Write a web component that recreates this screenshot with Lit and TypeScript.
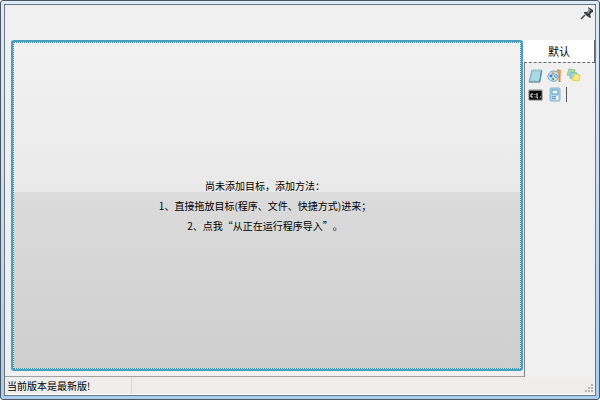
import { LitElement, html, css, svg } from "lit";
import { customElement } from "lit/decorators.js";

const pin = svg`
  <path d="M8 1l5 3v2l-2 1-1 2 1 2-1 1-3-2-3-3V6l3 0 2-2z" fill="#343a40"/>
  <path d="M9 3l2 1-3 4-1-1z" fill="#8b949c"/>
  <path d="M5 9L1 13" stroke="#444" stroke-width="1.500"/>`;

const notepad = svg`
  <path d="M4 2h10l-2 12H1z" fill="#9fcfdc" stroke="#83aab8"/>
  <path d="M5 4h7l-1 8H3z" fill="#a9dbe6"/>
  <path d="M4 2h10" stroke="#d8eaee" stroke-dasharray="1 1"/>
  <path d="M13.500 3l-2 11" stroke="#4b8797"/>
  <path d="M1 14h11" stroke="#71919c"/>`;

const paint = svg`
  <path d="M7 3C3 3 1 6 1 9s4 5 8 4c2-1 1-3 3-4s1-6-5-6z" fill="#c5dff0" stroke="#72a9cd"/>
  <circle cx="4" cy="8" r="1.400" fill="#3b87c8"/>
  <circle cx="6" cy="5.500" r="1.200" fill="#e5875c"/>
  <circle cx="6" cy="11" r="1.200" fill="#5cae78"/>
  <circle cx="9" cy="8" r="1.400" fill="#fff" stroke="#4b8fbd"/>
  <path d="M12.500 5v9" stroke="#dc8a34" stroke-width="2"/>
  <path d="M10 1l4 1v3h-4z" fill="#e3a052"/>`;

const notes = svg`
  <path d="M3 1l6 1-1 6-7-1z" fill="#b2dba0" stroke="#93c990"/>
  <path d="M5 4l6 1-1 6-6-1z" fill="#9fd2df" stroke="#7dbac9"/>
  <path d="M8 6l6 1-1 6-7-1z" fill="#f6ea86" stroke="#e0cf62"/>`;

const cmd = svg`
  <path d="M1 3h13v10H1z" fill="#050505" stroke="#777"/>
  <path d="M1 3h13" stroke="#b8bcc0"/>
  <path d="M5 7H3v3h2M7 7v1M7 9.500v1M9 6v5h1M12 10h1" stroke="#f2f2f2" fill="none"/>`;

const calc = svg`
  <rect x="3" y="1" width="10" height="13" rx="1" fill="#b5d7ec" stroke="#88b4d2"/>
  <rect x="5" y="3" width="6" height="4" fill="#eaf8fc" stroke="#5c9fc6"/>
  <path d="M5 9.500h5M5 11.500h5" stroke="#6c9fc2"/>
  <path d="M9 9h2v4H9z" fill="#f3f4ee"/>`;

const tools = [
  { name: "记事本", art: notepad },
  { name: "画图", art: paint },
  { name: "便笺", art: notes },
  { name: "命令提示符", art: cmd },
  { name: "计算器", art: calc },
];

@customElement("app-root")
export class AppRoot extends LitElement {
  static styles = css`
    :host {
      display: block;
      height: 100vh;
      font: 10px/20px "Noto Sans CJK SC", sans-serif;
      text-spacing-trim: space-all;
      color: #000;
    }
    * { box-sizing: border-box; }
    button {
      margin: 0;
      padding: 0;
      border: 0;
      background: none;
      font: inherit;
      color: inherit;
      text-spacing-trim: inherit;
    }
    svg { display: block; }
    .frame {
      height: 100%;
      padding: 3px;
      border: 1px solid #4c5663;
      border-radius: 3px;
      background: linear-gradient(#dcebf7, #cfe3f6 30%, #a9cdf0);
    }
    .window {
      height: 100%;
      display: flex;
      flex-direction: column;
      border: 1px solid #687583;
      background: #f0f0f0;
    }
    .top {
      flex: none;
      height: 35px;
      padding: 1px;
      display: flex;
      justify-content: flex-end;
      align-items: flex-start;
    }
    .main {
      flex: 1;
      min-height: 0;
      display: flex;
    }
    .page {
      flex: 1;
      min-width: 0;
      padding: 0 1px 5px 6px;
      border-bottom: 1px solid #a0a0a0;
      display: flex;
    }
    .drop {
      flex: 1;
      border: 2px solid #489fbe;
      border-radius: 3px;
      background: #d9edf3;
      display: flex;
      align-items: stretch;
    }
    .drop-body {
      flex: 1;
      padding-right: 4px;
      display: flex;
      flex-direction: column;
      align-items: center;
      justify-content: center;
      border: 1px dotted #3d8ca8;
      background: linear-gradient(#f2f2f2, #e9e9e9 46%, #dbdbdb 46%, #cecece) padding-box;
    }
    .side {
      flex: none;
      width: 71px;
      display: flex;
      flex-direction: column;
    }
    .tab {
      height: 22px;
      border-right: 1px solid #696969;
      background: #fff;
      font-size: 11px;
    }
    .tools {
      flex: 1;
      padding: 5px 0 0 3px;
      border-left: 1px solid #808080;
      border-top: 1px dashed #696969;
      display: grid;
      grid-template-columns: repeat(3, 19px);
      grid-auto-rows: 19px;
      align-content: start;
    }
    .tool {
      width: 16px;
      height: 16px;
    }
    .mark {
      width: 1px;
      height: 15px;
      background: #555;
    }
    .status {
      flex: none;
      height: 18px;
      padding-left: 2px;
      border-bottom: 1px solid #fff;
      background: #f0eded;
      display: flex;
      justify-content: space-between;
      align-items: flex-end;
      line-height: 17px;
    }
    .message {
      width: 125px;
      border-right: 1px solid #d7d7d7;
    }
  `;

  render() {
    return html`
      <div class="frame">
        <div class="window">
          <header class="top">
            <button aria-label="置顶"><svg width="14" height="14">${pin}</svg></button>
          </header>
          <main class="main">
            <section class="page">
              <button class="drop">
                <span class="drop-body">
                  <span>尚未添加目标，添加方法：</span>
                  <span>1、直接拖放目标(程序、文件、快捷方式)进来；</span>
                  <span>2、点我“从正在运行程序导入”。</span>
                </span>
              </button>
            </section>
            <aside class="side">
              <button class="tab">默认</button>
              <div class="tools">
                ${tools.map(
                  (t) => html`<button class="tool" aria-label=${t.name}>
                    <svg width="16" height="16">${t.art}</svg>
                  </button>`
                )}
                <span class="mark"></span>
              </div>
            </aside>
          </main>
          <footer class="status">
            <span class="message">当前版本是最新版!</span>
            <svg width="10" height="10" fill="#b5b5b5">
              <path d="M6 0h2v2H6zM3 3h2v2H3zM6 3h2v2H6zM0 6h2v2H0zM3 6h2v2H3zM6 6h2v2H6z"/>
            </svg>
          </footer>
        </div>
      </div>
    `;
  }
}
